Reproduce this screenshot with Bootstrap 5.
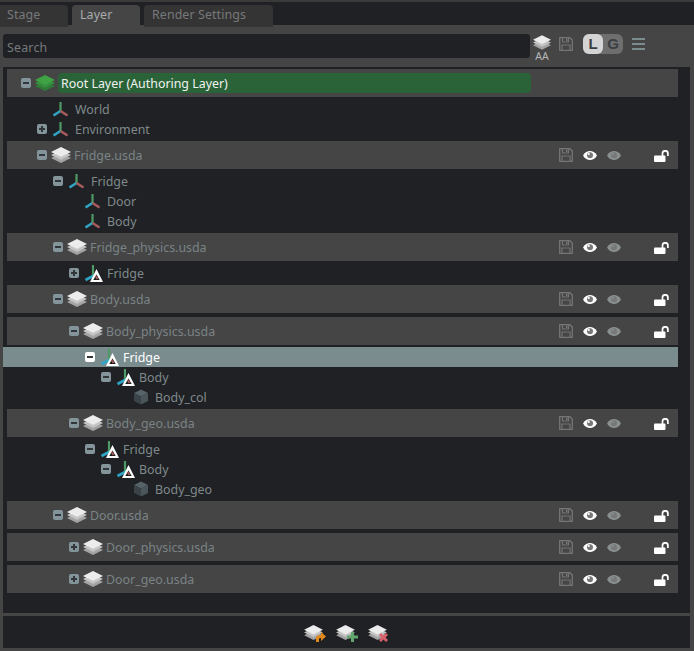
<!DOCTYPE html>
<html lang="en">
<head>
    <meta charset="UTF-8">
    <title>Layer</title>
    <link href="https://cdn.jsdelivr.net/npm/bootstrap@5.3.3/dist/css/bootstrap.min.css" rel="stylesheet">
    <style>
        html, body { height: 651px; overflow: hidden; }
        body { background: #1f2124; font-family: "Noto Sans", sans-serif; font-size: 12.4px; line-height: 20px; color: #7f898b; }
        .tab-strip { height: 25px; padding: 3px 0 0 0; border-top: 2px solid #3a3a3a; gap: 4px; }
        .tab-item { height: 22px; padding: 0 8px; background: #343434; color: #77797b; border-radius: 4px 4px 0 0; letter-spacing: .1px; line-height: 20px; }
        .tab-first { width: 68px; border-top-left-radius: 0; padding-left: 7px; }
        .tab-active { width: 68px; background: #454545; color: #a9abad; }
        .tab-render { width: 129px; }
        .main-pane { background: #454545; height: 626px; padding: 9px 4px 3px 3px; }
        .search-row { height: 33px; flex: none; }
        .search-box { width: 527px; height: 24px; background: #1f2124; border-radius: 3px; padding: 1px 4px 0; color: #77797b; letter-spacing: .2px; line-height: 26px; }
        .tool-stack { width: 18px; margin-left: 3px; margin-top: 1px; height: 30px; }
        .aa-label { font-size: 10.5px; line-height: 12px; color: #b5b7b9; display: block; text-align: center; }
        .tool-disk { margin: 3px 0 0 8px; }
        .lg-switch { width: 40px; height: 20px; margin-left: 10px; border-radius: 6px; background: #6e6e6e; font-family: "Liberation Sans", sans-serif; font-weight: 700; font-size: 15px; }
        .lg-on { width: 20px; height: 20px; border-radius: 6px; background: #d4d4d4; color: #3b3f42; text-align: center; }
        .lg-off { width: 20px; height: 20px; color: #3b3f42; text-align: center; }
        .tool-menu { margin: 4px 0 0 9px; }
        .tree-pane { height: 546px; background: #1f2124; padding: 2px 12px 0 4px; }
        .layer-row { height: 28px; margin: 2px 0; background: #454545; color: #7a8385; flex: none; }
        .layer-row:first-child { margin-top: 0; }
        .prim-row { height: 20px; flex: none; }
        .prim-sel { background: #7a8c8e; color: #fff; margin-left: -4px; }
        .row-label { padding-top: 2px; }
        .d0 { padding-left: 14px; }
        .d1 { padding-left: 30px; }
        .d2 { padding-left: 46px; }
        .d3 { padding-left: 62px; }
        .d4 { padding-left: 78px; }
        .d5 { padding-left: 94px; }
        .d6 { padding-left: 110px; }
        .prim-sel.d4 { padding-left: 82px; }
        .tog { width: 10px; height: 10px; margin-right: 6px; flex: none; color: #83959a; }
        .prim-sel .tog { color: #fff; }
        .layer-row .tog { margin-right: 4px; }
        .no-tog { width: 16px; flex: none; }
        .ic-prim { width: 16px; height: 18px; margin-right: 6px; flex: none; overflow: visible; }
        .ic-layer { width: 20px; height: 16px; margin-right: 3px; flex: none; }
        .root-bar { position: absolute; left: 51px; top: 4px; width: 473px; height: 20px; padding: 1px 0 0 3px; background: #2b6339; color: #f0f2f0; border-radius: 4px; }
        .row-tools { position: absolute; left: 552px; top: 0; }
        .sep-bar { height: 3px; background: #454545; flex: none; margin: 0 -4px 0 -3px; }
        .foot-bar { height: 32px; background: #1f2124; gap: 10px; padding-top: 2px; }
    </style>
</head>
<body>
    <svg width="0" height="0" class="position-absolute">
        <defs>
            <symbol id="xf" viewBox="0 0 16 18">
                <path d="M7.500 2v9" stroke="#4d9a66" stroke-width="2.200" fill="none"/>
                <path d="M7.500 11 .5 15.500" stroke="#2fa6c4" stroke-width="2.600" fill="none"/>
                <path d="M7.500 11l7 4.500" stroke="#a85a5c" stroke-width="2.600" fill="none"/>
            </symbol>
            <symbol id="xfw" viewBox="0 0 18 18" overflow="visible">
                <path d="M8 1v11" stroke="#4d9a66" stroke-width="2.200" fill="none"/>
                <path d="M8 12 .5 16" stroke="#2fa6c4" stroke-width="2.600" fill="none"/>
                <path d="M11.500 5 18 18H5z" fill="#fff"/>
                <path d="M11.500 10.500 14.700 16H8.300z" fill="#1a1a1a"/>
                <path d="M10.500 12l2 3" stroke="#a85a5c" stroke-width="1.800" fill="none"/>
            </symbol>
            <symbol id="stack" viewBox="0 0 20 16">
                <path d="M0 11 3.500 9.200 10 12.400l6.500-3.200L20 11l-10 5z" fill="#a3a3a3"/>
                <path d="M0 8 3.500 6.200 10 9.400l6.500-3.200L20 8l-10 5z" fill="#c4c4c4"/>
                <path d="M10 0l10 5-10 5L0 5z" fill="#ececec"/>
            </symbol>
            <symbol id="stackg" viewBox="0 0 20 16">
                <path d="M0 11 3.500 9.200 10 12.400l6.500-3.200L20 11l-10 5z" fill="#2f7a36"/>
                <path d="M0 8 3.500 6.200 10 9.400l6.500-3.200L20 8l-10 5z" fill="#37903e"/>
                <path d="M10 0l10 5-10 5L0 5z" fill="#3fa346"/>
            </symbol>
            <symbol id="minus" viewBox="0 0 10 10">
                <rect width="10" height="10" rx="2" fill="currentColor"/>
                <rect x="2" y="4" width="6" height="2" fill="#33373a"/>
            </symbol>
            <symbol id="plus" viewBox="0 0 10 10">
                <rect width="10" height="10" rx="2" fill="currentColor"/>
                <path d="M2 4h2V2h2v2h2v2H6v2H4V6H2z" fill="#33373a"/>
            </symbol>
            <symbol id="disk" viewBox="0 0 14 14">
                <path d="M.7.7h10.200l2.400 2.400v10.200H.7z" fill="none" stroke="#757575" stroke-width="1.300"/>
                <path d="M3.500 1v4h6V1M3 13V8h8v5" fill="none" stroke="#757575" stroke-width="1.200"/>
                <rect x="7" y="1.500" width="1.500" height="2.500" fill="#757575"/>
            </symbol>
            <symbol id="eye" viewBox="0 0 14 10">
                <path d="M0 5C2 1.500 4.500.5 7 .5S12 1.500 14 5c-2 3.500-4.500 4.500-7 4.500S2 8.500 0 5z" fill="currentColor"/>
                <circle cx="7" cy="4.800" r="3" fill="#777"/>
                <circle cx="5.800" cy="3.500" r="1.100" fill="currentColor"/>
            </symbol>
            <symbol id="lock" viewBox="0 0 15 12">
                <rect y="5.500" width="11.500" height="6.500" rx="1" fill="#fff"/>
                <path d="M8.500 6V3.500a2.700 2.700 0 0 1 5.400 0V6" fill="none" stroke="#fff" stroke-width="1.700"/>
            </symbol>
            <symbol id="cube" viewBox="0 0 16 16">
                <path d="M8 .5 15 4 8 7.500 1 4z" fill="#56646a"/>
                <path d="M1 4l7 3.500v8L1 12z" fill="#3a4448"/>
                <path d="M15 4 8 7.500v8l7-3.500z" fill="#4a565b"/>
            </symbol>
            <symbol id="tools" viewBox="0 0 112 28">
                <use href="#disk" x="0" y="7" width="14" height="14"/>
                <use href="#eye" x="24" y="9.500" width="14" height="10" color="#fff"/>
                <use href="#eye" x="48" y="9.500" width="14" height="10" color="#8a8f90"/>
                <use href="#lock" x="95" y="9" width="15" height="12"/>
            </symbol>
        </defs>
    </svg>

    <div class="tab-strip d-flex">
        <div class="tab-item tab-first">Stage</div>
        <div class="tab-item tab-active">Layer</div>
        <div class="tab-item tab-render">Render Settings</div>
    </div>

    <div class="main-pane d-flex flex-column">
        <div class="search-row d-flex align-items-start">
            <div class="search-box">Search</div>
            <div class="tool-stack">
                <svg width="18" height="15" class="d-block"><use href="#stack"/></svg>
                <span class="aa-label">AA</span>
            </div>
            <svg width="14" height="14" class="tool-disk"><use href="#disk"/></svg>
            <div class="lg-switch d-flex">
                <div class="lg-on">L</div>
                <div class="lg-off">G</div>
            </div>
            <svg width="13" height="12" class="tool-menu" viewBox="0 0 13 12"><path d="M0 1h13M0 6h13M0 11h13" stroke="#7a8c8e" stroke-width="2.200"/></svg>
        </div>

        <div class="tree-pane d-flex flex-column">
            <div class="layer-row position-relative d-flex align-items-center d0">
                <svg class="tog"><use href="#minus"/></svg>
                <svg class="ic-layer"><use href="#stackg"/></svg>
                <div class="root-bar">Root Layer (Authoring Layer)</div>
            </div>
            <div class="prim-row d-flex align-items-center d1"><span class="no-tog"></span><svg class="ic-prim"><use href="#xf"/></svg><span class="row-label">World</span></div>
            <div class="prim-row d-flex align-items-center d1"><svg class="tog"><use href="#plus"/></svg><svg class="ic-prim"><use href="#xf"/></svg><span class="row-label">Environment</span></div>

            <div class="layer-row position-relative d-flex align-items-center d1"><svg class="tog"><use href="#minus"/></svg><svg class="ic-layer"><use href="#stack"/></svg><span class="row-label">Fridge.usda</span>
                <svg class="row-tools" width="112" height="28"><use href="#tools"/></svg>
            </div>
            <div class="prim-row d-flex align-items-center d2"><svg class="tog"><use href="#minus"/></svg><svg class="ic-prim"><use href="#xf"/></svg><span class="row-label">Fridge</span></div>
            <div class="prim-row d-flex align-items-center d3"><span class="no-tog"></span><svg class="ic-prim"><use href="#xf"/></svg><span class="row-label">Door</span></div>
            <div class="prim-row d-flex align-items-center d3"><span class="no-tog"></span><svg class="ic-prim"><use href="#xf"/></svg><span class="row-label">Body</span></div>

            <div class="layer-row position-relative d-flex align-items-center d2"><svg class="tog"><use href="#minus"/></svg><svg class="ic-layer"><use href="#stack"/></svg><span class="row-label">Fridge_physics.usda</span>
                <svg class="row-tools" width="112" height="28"><use href="#tools"/></svg>
            </div>
            <div class="prim-row d-flex align-items-center d3"><svg class="tog"><use href="#plus"/></svg><svg class="ic-prim"><use href="#xfw" width="18" height="18"/></svg><span class="row-label">Fridge</span></div>

            <div class="layer-row position-relative d-flex align-items-center d2"><svg class="tog"><use href="#minus"/></svg><svg class="ic-layer"><use href="#stack"/></svg><span class="row-label">Body.usda</span>
                <svg class="row-tools" width="112" height="28"><use href="#tools"/></svg>
            </div>
            <div class="layer-row position-relative d-flex align-items-center d3"><svg class="tog"><use href="#minus"/></svg><svg class="ic-layer"><use href="#stack"/></svg><span class="row-label">Body_physics.usda</span>
                <svg class="row-tools" width="112" height="28"><use href="#tools"/></svg>
            </div>
            <div class="prim-row prim-sel d-flex align-items-center d4"><svg class="tog"><use href="#minus"/></svg><svg class="ic-prim"><use href="#xfw" width="18" height="18"/></svg><span class="row-label">Fridge</span></div>
            <div class="prim-row d-flex align-items-center d5"><svg class="tog"><use href="#minus"/></svg><svg class="ic-prim"><use href="#xfw" width="18" height="18"/></svg><span class="row-label">Body</span></div>
            <div class="prim-row d-flex align-items-center d6"><span class="no-tog"></span><svg class="ic-prim"><use href="#cube"/></svg><span class="row-label">Body_col</span></div>

            <div class="layer-row position-relative d-flex align-items-center d3"><svg class="tog"><use href="#minus"/></svg><svg class="ic-layer"><use href="#stack"/></svg><span class="row-label">Body_geo.usda</span>
                <svg class="row-tools" width="112" height="28"><use href="#tools"/></svg>
            </div>
            <div class="prim-row d-flex align-items-center d4"><svg class="tog"><use href="#minus"/></svg><svg class="ic-prim"><use href="#xfw" width="18" height="18"/></svg><span class="row-label">Fridge</span></div>
            <div class="prim-row d-flex align-items-center d5"><svg class="tog"><use href="#minus"/></svg><svg class="ic-prim"><use href="#xfw" width="18" height="18"/></svg><span class="row-label">Body</span></div>
            <div class="prim-row d-flex align-items-center d6"><span class="no-tog"></span><svg class="ic-prim"><use href="#cube"/></svg><span class="row-label">Body_geo</span></div>

            <div class="layer-row position-relative d-flex align-items-center d2"><svg class="tog"><use href="#minus"/></svg><svg class="ic-layer"><use href="#stack"/></svg><span class="row-label">Door.usda</span>
                <svg class="row-tools" width="112" height="28"><use href="#tools"/></svg>
            </div>
            <div class="layer-row position-relative d-flex align-items-center d3"><svg class="tog"><use href="#plus"/></svg><svg class="ic-layer"><use href="#stack"/></svg><span class="row-label">Door_physics.usda</span>
                <svg class="row-tools" width="112" height="28"><use href="#tools"/></svg>
            </div>
            <div class="layer-row position-relative d-flex align-items-center d3"><svg class="tog"><use href="#plus"/></svg><svg class="ic-layer"><use href="#stack"/></svg><span class="row-label">Door_geo.usda</span>
                <svg class="row-tools" width="112" height="28"><use href="#tools"/></svg>
            </div>
        </div>

        <div class="sep-bar"></div>
        <div class="foot-bar d-flex justify-content-center align-items-center">
            <svg width="22" height="17" viewBox="0 0 22 17"><use href="#stack" width="19" height="15"/><path d="M12 17v-4q0-3 4-3h1V7l5 4.500L17 16v-3h-1q-1 0-1 1v3z" fill="#e08a1e"/></svg>
            <svg width="22" height="17" viewBox="0 0 22 17"><use href="#stack" width="19" height="15"/><path d="M15 7h3v3.500h4v3h-4V17h-3v-3.500h-4v-3h4z" fill="#62a66f"/></svg>
            <svg width="22" height="17" viewBox="0 0 22 17"><use href="#stack" width="19" height="15"/><path d="M13 8l-2 2 2.500 2.500L11 15l2 2 2.500-2.500L18 17l2-2-2.500-2.500L20 10l-2-2-2.500 2.500z" fill="#d9606a"/></svg>
        </div>
    </div>

    <script src="https://cdn.jsdelivr.net/npm/bootstrap@5.3.3/dist/js/bootstrap.bundle.min.js"></script>
</body>
</html>
